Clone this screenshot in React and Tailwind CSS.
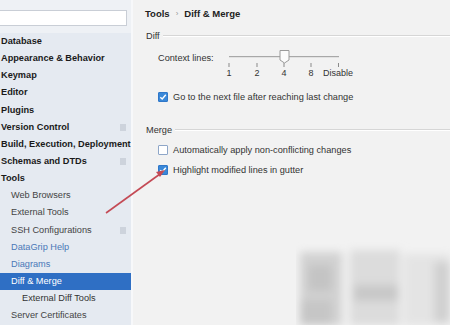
import React from "react";

const items = [
  { label: "Database", level: 0 },
  { label: "Appearance & Behavior", level: 0 },
  { label: "Keymap", level: 0 },
  { label: "Editor", level: 0 },
  { label: "Plugins", level: 0 },
  { label: "Version Control", level: 0, icon: true },
  { label: "Build, Execution, Deployment", level: 0 },
  { label: "Schemas and DTDs", level: 0, icon: true },
  { label: "Tools", level: 0 },
  { label: "Web Browsers", level: 1 },
  { label: "External Tools", level: 1 },
  { label: "SSH Configurations", level: 1, icon: true },
  { label: "DataGrip Help", level: 1, link: true },
  { label: "Diagrams", level: 1, link: true },
  { label: "Diff & Merge", level: 1, selected: true },
  { label: "External Diff Tools", level: 2 },
  { label: "Server Certificates", level: 1 },
];

const Checkbox = ({ checked }) => (
  <span
    className={`flex h-[10px] w-[10px] shrink-0 items-center justify-center rounded-[1px] border ${
      checked ? "border-[#2f77c9] bg-[#3a88d8]" : "border-[#8ea6c8] bg-white"
    }`}
  >
    {checked && (
      <svg width="8" height="8" viewBox="0 0 8 8">
        <path d="M1.3 4.2 L3.2 6 L6.8 1.8" fill="none" stroke="white" strokeWidth="1.4" />
      </svg>
    )}
  </span>
);

const Section = ({ title }) => (
  <div className="flex h-[10px] items-center gap-[3px] pl-[13px]">
    <span className="text-[9.2px] leading-[10px] text-[#333]">{title}</span>
    <div className="h-[2px] flex-1 border-t border-b border-t-[#d6d6d6] border-b-white" />
  </div>
);

const CheckRow = ({ checked, label, className }) => (
  <div className={`flex h-[10px] items-center gap-[5px] pl-[25px] text-[9.2px] leading-[10px] text-[#333] ${className}`}>
    <Checkbox checked={checked} />
    <span className="whitespace-nowrap">{label}</span>
  </div>
);

const ticks = [
  { x: 0, label: "1" },
  { x: 28, label: "2" },
  { x: 55, label: "4" },
  { x: 82, label: "8" },
  { x: 109, label: "Disable" },
];

export default function App() {
  return (
    <div className="relative flex h-[325px] w-[450px] overflow-hidden bg-[#f2f2f2] font-['Liberation_Sans',Arial,sans-serif]">
      <div className="flex w-[131px] shrink-0 flex-col bg-[#e5eaf1]">
        <div className="h-[33px] shrink-0 bg-[#eef1f5] pt-[10px] pr-[4px]">
          <div className="h-[16px] border border-l-0 border-[#c9ced6] bg-white" />
        </div>
        {items.map((it) => (
          <div
            key={it.label}
            className={`flex h-[17.15px] shrink-0 items-center justify-between pr-[5px] text-[9.2px] leading-none ${
              it.selected ? "bg-[#2f6fc4] text-white" : ""
            } ${it.level === 0 ? "font-bold text-[#1a1a1a]" : ""} ${
              it.level === 1 && !it.selected ? (it.link ? "text-[#4a78b8]" : "text-[#444]") : ""
            } ${it.level === 2 ? "text-[#333]" : ""}`}
            style={{ paddingLeft: it.level === 0 ? 1 : it.level === 1 ? 11 : 22 }}
          >
            <span className="whitespace-nowrap">{it.label}</span>
            {it.icon && <span className="h-[7px] w-[6px] bg-[#cdd3dc]" />}
          </div>
        ))}
      </div>
      <div className="w-[2px] bg-[#f7f8fa]" />

      <div className="flex flex-1 flex-col pt-[9px]">
        <div className="flex h-[10px] items-center gap-[6px] pl-[12px] text-[9.5px] leading-[10px] font-bold text-[#222]">
          <span>Tools</span>
          <span className="text-[8px] font-normal text-[#999]">›</span>
          <span>Diff &amp; Merge</span>
        </div>

        <div className="mt-[12px]">
          <Section title="Diff" />
        </div>

        <div className="mt-[8px] flex h-[30px] pl-[25px]">
          <span className="mt-[4px] h-[10px] w-[71px] shrink-0 text-[9.2px] leading-[10px] text-[#333]">Context lines:</span>
          <div className="relative h-[30px] w-[140px]">
            <div className="absolute left-0 top-[7px] h-[2px] w-[110px] border-t border-[#a8a8a8] bg-[#e2e2e2]" />
            {ticks.map((t) => (
              <div key={t.label} className="absolute top-[14px] flex -translate-x-1/2 flex-col items-center" style={{ left: t.x }}>
                <span className="h-[4px] w-px bg-[#8a8a8a]" />
                <span className="mt-[2px] text-[9px] leading-none text-[#333]">{t.label}</span>
              </div>
            ))}
            <svg className="absolute left-[50px] top-[0px]" width="11" height="15" viewBox="0 0 11 15">
              <path d="M1 1.5 H10 V11 L5.5 14 L1 11 Z" fill="#fbfbfb" stroke="#9a9a9a" strokeWidth="1" />
            </svg>
          </div>
        </div>

        <CheckRow checked label="Go to the next file after reaching last change" className="mt-[13px]" />

        <div className="mt-[23px]">
          <Section title="Merge" />
        </div>

        <CheckRow label="Automatically apply non-conflicting changes" className="mt-[10px]" />
        <CheckRow checked label="Highlight modified lines in gutter" className="mt-[10px]" />
      </div>

      <svg className="pointer-events-none absolute left-0 top-0" width="450" height="325">
        <line x1="106" y1="213" x2="160" y2="174" stroke="#c44a55" strokeWidth="1.6" />
        <path d="M165 170 L156 172 L160 177 Z" fill="#c44a55" />
      </svg>

      <svg className="pointer-events-none absolute left-[296px] top-[240px]" width="154" height="85">
        <defs>
          <filter id="b" x="-20%" y="-20%" width="140%" height="140%">
            <feGaussianBlur stdDeviation="4" />
          </filter>
        </defs>
        <g filter="url(#b)">
          <rect x="4" y="12" width="42" height="73" fill="#d2d2d2" />
          <rect x="12" y="25" width="24" height="26" fill="#c4c4c4" />
          <rect x="54" y="10" width="50" height="75" fill="#dcdcdc" />
          <rect x="58" y="45" width="44" height="16" fill="#c8c8c8" />
          <rect x="108" y="14" width="46" height="71" fill="#e4e4e4" />
          <rect x="138" y="22" width="16" height="60" fill="#d0d0d0" />
          <rect x="4" y="60" width="32" height="25" fill="#c6c6c6" />
        </g>
      </svg>
    </div>
  );
}
